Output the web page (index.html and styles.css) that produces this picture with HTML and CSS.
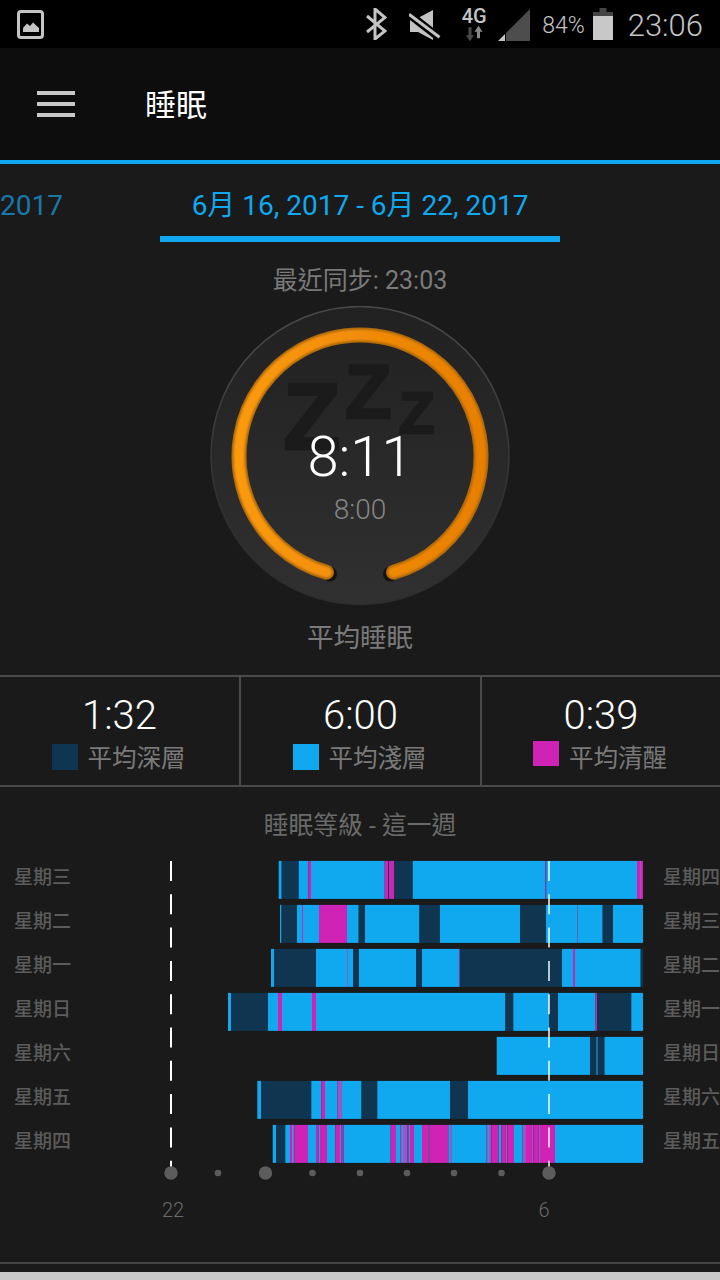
FILE: index.html
```html
<!DOCTYPE html>
<html lang="zh-Hant">
<head>
    <meta charset="UTF-8">
    <meta name="viewport" content="width=device-width, initial-scale=1.0">
    <title>睡眠</title>
    <link rel="stylesheet" href="styles.css">
</head>
<body>
    <div class="status-bar">
        <svg class="icon-picture" width="27" height="29" viewBox="0 0 27 29">
            <rect x="1.500" y="1.500" width="24" height="26" rx="2.500" fill="none" stroke="#c4c4c4" stroke-width="3"/>
            <path d="M6 22v-4l4-4.500 3 2.500 3-3.500 6 5.500v4z" fill="#c4c4c4"/>
        </svg>
        <div class="status-right">
            <svg class="icon-bt" width="22" height="32" viewBox="0 0 22 32">
                <path d="M2 8l18 15-10 8V1l10 8.500L2 24" fill="none" stroke="#c4c4c4" stroke-width="3"/>
            </svg>
            <svg class="icon-mute" width="32" height="31" viewBox="0 0 32 31">
                <path d="M1 8h8L24 0v30L9 22H1z" fill="#c4c4c4"/>
                <path d="M-2 2.500L32 29" stroke="#000" stroke-width="8"/>
                <path d="M0 4.300L30.500 27.300" stroke="#c4c4c4" stroke-width="3"/>
            </svg>
            <div class="net">
                <span class="net-label">4G</span>
                <svg width="20" height="16" viewBox="0 0 20 16">
                    <path d="M4.500 2.300h3v8h2.500l-4 6-4-6h2.500z" fill="#4a4a4a"/>
                    <path d="M14.500 .700l4 6h-2.500v6.600h-3V6.700h-2.500z" fill="#8a8a8a"/>
                </svg>
            </div>
            <svg class="icon-signal" width="32" height="32" viewBox="0 0 32 32">
                <path d="M8 32V24L32 0v32z" fill="#4d4d4d"/>
                <path d="M0 32l7-7v7z" fill="#c4c4c4"/>
            </svg>
            <span class="battery-text">84%</span>
            <svg class="icon-battery" width="20" height="32" viewBox="0 0 20 32">
                <path d="M6.500 0h7v4H20v4H0V4h6.500z" fill="#444"/>
                <rect y="8" width="20" height="24" fill="#c8c8c8"/>
            </svg>
            <span class="clock">23:06</span>
        </div>
    </div>

    <header class="app-bar">
        <div class="menu-btn"><span></span><span></span><span></span></div>
        <h1 class="app-title">睡眠</h1>
    </header>

    <nav class="tabs">
        <div class="tab tab-prev">2017</div>
        <div class="tab tab-active">6月 16, 2017 - 6月 22, 2017</div>
    </nav>

    <p class="sync">最近同步: 23:03</p>

    <div class="dial">
        <svg class="dial-art" width="300" height="300" viewBox="0 0 300 300">
            <defs>
                <linearGradient id="dialFill" x1="0" y1="0" x2="0" y2="1">
                    <stop offset="0" stop-color="#212121"/>
                    <stop offset="1" stop-color="#303030"/>
                </linearGradient>
                <linearGradient id="dialEdge" x1="0" y1="0" x2="0" y2="1">
                    <stop offset="0" stop-color="#4a4a4a"/>
                    <stop offset="0.7" stop-color="#303030"/>
                    <stop offset="1" stop-color="#2c2c2c"/>
                </linearGradient>
                <linearGradient id="ringFill" x1="0" y1="0" x2="1" y2="0">
                    <stop offset="0" stop-color="#fb9a0c"/>
                    <stop offset="1" stop-color="#e87f02"/>
                </linearGradient>
                <filter id="ringSoft" x="-10%" y="-10%" width="120%" height="120%">
                    <feGaussianBlur stdDeviation="1"/>
                </filter>
            </defs>
            <circle cx="150" cy="149.500" r="149" fill="url(#dialFill)" stroke="url(#dialEdge)" stroke-width="1.500"/>
            <text class="zzz" x="73" y="142.500" font-size="94">Z</text>
            <text class="zzz" x="135" y="111.500" font-size="76">Z</text>
            <text class="zzz" x="189" y="126.500" font-size="58">Z</text>
            <circle cx="119.500" cy="268" r="7.500" fill="#121212"/>
            <circle cx="180.500" cy="268" r="7.500" fill="#121212"/>
            <path d="M116.500 266.300A121 121 0 1 1 183.500 266.300" fill="none" stroke="#a8660e" stroke-width="15" stroke-linecap="round"/>
            <path d="M116.500 266.300A121 121 0 1 1 183.500 266.300" fill="none" stroke="url(#ringFill)" stroke-width="11" stroke-linecap="round" filter="url(#ringSoft)"/>
        </svg>
        <div class="dial-value">8:11</div>
        <div class="dial-goal">8:00</div>
    </div>

    <p class="dial-label">平均睡眠</p>

    <section class="stats">
        <div class="stat">
            <div class="stat-value">1:32</div>
            <div class="stat-legend"><span class="swatch swatch-deep"></span>平均深層</div>
        </div>
        <div class="stat">
            <div class="stat-value">6:00</div>
            <div class="stat-legend"><span class="swatch swatch-light"></span>平均淺層</div>
        </div>
        <div class="stat">
            <div class="stat-value">0:39</div>
            <div class="stat-legend"><span class="swatch swatch-awake"></span>平均清醒</div>
        </div>
    </section>

    <section class="levels">
        <h2 class="levels-title">睡眠等級 - 這一週</h2>
        <div class="chart">
            <div class="days days-left">
                <span>星期三</span><span>星期二</span><span>星期一</span><span>星期日</span><span>星期六</span><span>星期五</span><span>星期四</span>
            </div>
            <svg id="bars" class="bars" width="510" height="370" viewBox="150 855 510 370"></svg>
            <div class="days days-right">
                <span>星期四</span><span>星期三</span><span>星期二</span><span>星期一</span><span>星期日</span><span>星期六</span><span>星期五</span>
            </div>
        </div>
    </section>

    <div class="page-end"></div>

    <script src="chart.js"></script>
</body>
</html>
```

FILE: styles.css
```css
* {
    box-sizing: border-box;
}
html, body {
    height: 1280px;
    overflow: hidden;
}
body {
    margin: 0;
    width: 720px;
    display: flex;
    flex-direction: column;
    background-color: #1a1a1a;
    color: #7a7a7a;
    font-family: Roboto, "Noto Sans CJK TC", sans-serif;
}
p, h1, h2 {
    margin: 0;
    font-weight: 400;
}

.status-bar {
    height: 48px;
    flex: none;
    display: flex;
    align-items: center;
    justify-content: space-between;
    padding: 0 17px 0 17px;
    background-color: #000;
    color: #c4c4c4;
}
.status-right {
    display: flex;
    align-items: center;
}
.icon-picture {
    margin-top: 1px;
}
.icon-bt {
    margin-right: 22px;
}
.icon-mute {
    margin-right: 20px;
    margin-top: 3px;
}
.net {
    width: 26px;
    display: flex;
    flex-direction: column;
    align-items: center;
    margin-right: 11px;
}
.net-label {
    font-size: 20px;
    line-height: 18px;
    font-weight: 500;
}
.icon-signal {
    margin-right: 12px;
    margin-top: 2px;
}
.battery-text {
    font-size: 23px;
    font-weight: 300;
    margin-right: 8px;
    margin-top: 2px;
}
.icon-battery {
    margin-right: 15px;
}
.clock {
    font-size: 31px;
    font-weight: 300;
    margin-top: 2px;
}

.app-bar {
    height: 112px;
    flex: none;
    display: flex;
    align-items: center;
    background-color: #0d0d0d;
    padding-left: 37px;
}
.menu-btn {
    width: 38px;
    display: flex;
    flex-direction: column;
    gap: 6.500px;
    margin-right: 70px;
}
.menu-btn span {
    height: 4.500px;
    background-color: #c8c8c8;
}
.app-title {
    font-size: 31px;
    color: #fff;
    padding-bottom: 4px;
}

.tabs {
    height: 82px;
    flex: none;
    display: flex;
    border-top: 4px solid #10a8ef;
}
.tab {
    font-size: 28px;
    line-height: 84px;
}
.tab-prev {
    width: 160px;
    color: #1a78a8;
}
.tab-active {
    width: 400px;
    text-align: center;
    color: #10a8ef;
    border-bottom: 6px solid #10a8ef;
}

.sync {
    margin-top: 22px;
    font-size: 25px;
    line-height: 34px;
    text-align: center;
}

.dial {
    position: relative;
    width: 300px;
    height: 300px;
    flex: none;
    margin: 8px auto 0;
    display: flex;
    flex-direction: column;
    align-items: center;
    padding-top: 117px;
}
.dial-art {
    position: absolute;
    left: 0;
    top: 0;
}
.zzz {
    font-family: "Liberation Sans", sans-serif;
    font-weight: 700;
    fill: #1b1b1b;
    stroke: #1b1b1b;
    stroke-width: 2.500px;
}
.dial-value {
    position: relative;
    font-size: 56px;
    line-height: 68px;
    font-weight: 300;
    color: #fff;
}
.dial-goal {
    position: relative;
    font-size: 28px;
    line-height: 36px;
    font-weight: 300;
    color: #858585;
    margin-top: 1px;
}
.dial-label {
    margin-top: 14px;
    font-size: 26.500px;
    line-height: 36px;
    text-align: center;
}

.stats {
    height: 112px;
    flex: none;
    margin-top: 19px;
    display: grid;
    grid-template-columns: 239px 241px 240px;
    border-top: 2px solid #4a4a4a;
    border-bottom: 2px solid #4a4a4a;
}
.stat {
    display: flex;
    flex-direction: column;
    align-items: center;
    padding-top: 15px;
}
.stat + .stat {
    border-left: 2px solid #4a4a4a;
}
.stat-value {
    font-size: 40px;
    line-height: 48px;
    font-weight: 300;
    color: #fff;
}
.stat-legend {
    display: flex;
    align-items: center;
    gap: 10px;
    font-size: 24.500px;
    line-height: 34px;
    margin-top: 2px;
    padding-right: 2px;
}
.swatch {
    width: 26px;
    height: 26px;
    margin-bottom: 4px;
}
.swatch-deep {
    background-color: #0f3550;
}
.swatch-light {
    background-color: #10a8ef;
}
.swatch-awake {
    background-color: #cf23b5;
    height: 25px;
    margin-top: -1px;
    margin-bottom: 10px;
}

.levels {
    flex: none;
}
.levels-title {
    margin-top: 21px;
    font-size: 24.800px;
    line-height: 36px;
    text-align: center;
    color: #6a6a6a;
}
.chart {
    margin-top: 11px;
    display: flex;
}
.bars {
    flex: none;
}
.days {
    display: flex;
    flex-direction: column;
    gap: 6px;
    padding-top: 4px;
    font-size: 19px;
    font-weight: 500;
    line-height: 38px;
    color: #5c5c5c;
    white-space: nowrap;
}
.days-left {
    width: 150px;
    flex: none;
    padding-left: 14px;
}
.days-right {
    padding-left: 3px;
}
.axis-label {
    font-family: Roboto, sans-serif;
    font-size: 20px;
    font-weight: 300;
    fill: #6a6a6a;
    text-anchor: middle;
}

.page-end {
    margin-top: 37px;
    flex: 1;
    border-top: 2px solid #444;
    background: linear-gradient(#1a1a1a 8px, #c8c8c8 8px);
}
```

FILE: chart.js
```js
const SVG_NS = "http://www.w3.org/2000/svg";
const bars = document.getElementById("bars");

const colors = {
    l: "#10a8ef",
    d: "#0f3550",
    p: "#cf23b5",
    v: "#9c55c6",
    m: "#1a6f9f",
};

// each row: start x, then [end x, sleep level] pairs
const rows = [
    [278.7, [281.7, "l"], [298.7, "d"], [308.3, "l"], [311, "p"], [384.7, "l"], [388, "p"], [389, "d"], [394, "p"], [412.7, "d"], [545.3, "l"], [546.2, "p"], [637, "l"], [640, "p"], [641, "v"], [643, "p"]],
    [280, [281.5, "l"], [297, "d"], [302, "l"], [303, "p"], [319, "l"], [347, "p"], [358.7, "l"], [365, "d"], [419.5, "l"], [440, "d"], [520, "l"], [546, "d"], [577, "l"], [577.8, "v"], [602.7, "l"], [613, "d"], [643, "l"]],
    [271, [274, "l"], [316, "d"], [347, "l"], [348, "v"], [353, "l"], [359, "d"], [416, "l"], [422, "d"], [459.5, "l"], [460, "p"], [562, "d"], [573, "l"], [575, "p"], [640.7, "l"], [643, "d"]],
    [228, [231, "l"], [268, "d"], [278, "l"], [282, "p"], [312, "l"], [316, "p"], [505.4, "l"], [513.3, "d"], [549.3, "l"], [558, "d"], [595.5, "l"], [597, "p"], [631.3, "d"], [643, "l"]],
    [496.7, [590, "l"], [596, "d"], [598, "m"], [604.5, "d"], [643, "l"]],
    [257.3, [261, "l"], [311.3, "d"], [321.3, "l"], [325, "p"], [337.3, "l"], [342, "v"], [361.5, "l"], [377.3, "d"], [450, "l"], [468, "d"], [643, "l"]],
    [272.7, [276, "l"], [285.3, "d"], [290, "l"], [292, "p"], [293, "l"], [294.7, "v"], [308, "p"], [316, "l"], [318.7, "p"], [320, "l"], [327, "p"], [335.3, "l"], [340, "p"], [341.3, "l"], [343.7, "p"], [390.7, "l"], [396, "p"], [400.3, "l"], [402, "v"], [403, "l"], [407.3, "v"], [408.7, "p"], [410, "l"], [414, "p"], [422, "l"], [428.3, "p"], [429.7, "v"], [448.3, "p"], [450, "l"], [452, "v"], [486.7, "l"], [488, "v"], [489, "l"], [491.3, "v"], [498.7, "p"], [501.3, "l"], [505.3, "p"], [507.3, "v"], [514, "p"], [522.7, "l"], [526, "v"], [532, "p"], [533.3, "v"], [538.7, "p"], [540, "v"], [555, "p"], [643, "l"]],
];

function add(tag, attrs) {
    const el = document.createElementNS(SVG_NS, tag);
    Object.keys(attrs).forEach(name => el.setAttribute(name, attrs[name]));
    bars.appendChild(el);
    return el;
}

rows.forEach((row, i) => {
    let x = row[0];
    row.slice(1).forEach(([end, level]) => {
        add("rect", {
            x: x,
            y: 860.9 + i * 44,
            width: end - x,
            height: 38,
            fill: colors[level],
        });
        x = end;
    });
});

// time markers over the bars
add("line", { x1: 171, x2: 171, y1: 861, y2: 1173, stroke: "#fff", "stroke-width": 2, "stroke-dasharray": "20 13.3" });
add("line", { x1: 549, x2: 549, y1: 861, y2: 1173, stroke: "rgba(255,255,255,0.72)", "stroke-width": 2, "stroke-dasharray": "20 13.3" });

[171, 265.5, 549].forEach(cx => add("circle", { cx: cx, cy: 1173, r: 6.7, fill: "#5c5c5c" }));
[218, 312.5, 360, 407, 454, 501.5].forEach(cx => add("circle", { cx: cx, cy: 1173, r: 3.3, fill: "#5c5c5c" }));

add("text", { x: 173, y: 1217, class: "axis-label" }).textContent = "22";
add("text", { x: 544, y: 1217, class: "axis-label" }).textContent = "6";
```
